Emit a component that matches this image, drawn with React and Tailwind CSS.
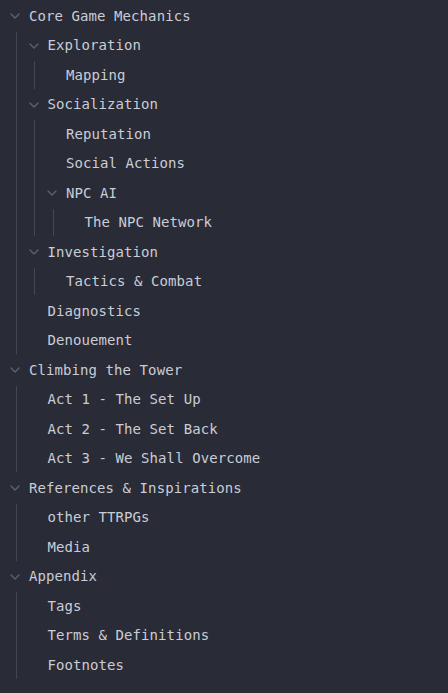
import React from 'react';

const tree = [
    {
        title: 'Core Game Mechanics',
        children: [
            { title: 'Exploration', children: [{ title: 'Mapping' }] },
            {
                title: 'Socialization',
                children: [
                    { title: 'Reputation' },
                    { title: 'Social Actions' },
                    { title: 'NPC AI', children: [{ title: 'The NPC Network' }] },
                ],
            },
            { title: 'Investigation', children: [{ title: 'Tactics & Combat' }] },
            { title: 'Diagnostics' },
            { title: 'Denouement' },
        ],
    },
    {
        title: 'Climbing the Tower',
        children: [
            { title: 'Act 1 - The Set Up' },
            { title: 'Act 2 - The Set Back' },
            { title: 'Act 3 - We Shall Overcome' },
        ],
    },
    {
        title: 'References & Inspirations',
        children: [{ title: 'other TTRPGs' }, { title: 'Media' }],
    },
    {
        title: 'Appendix',
        children: [{ title: 'Tags' }, { title: 'Terms & Definitions' }, { title: 'Footnotes' }],
    },
];

const INDENT = 18.5;

const Chevron = () => (
    <svg width="10" height="6" viewBox="0 0 10 6" fill="none" className="shrink-0">
        <path d="M1 1 L5 5 L9 1" stroke="#5c6070" strokeWidth="1.4" strokeLinecap="round" strokeLinejoin="round" />
    </svg>
);

const TreeNode = ({ node, depth }) => {
    const hasChildren = node.children && node.children.length > 0;
    return (
        <div>
            {/* qator: chuqurlikka qarab chapdan surilgan */}
            <div className="flex items-center h-[29.5px] gap-[9px]" style={{ paddingLeft: 10 + depth * INDENT }}>
                <span className="w-[10px] flex items-center justify-center">{hasChildren && <Chevron />}</span>
                <span className="text-[14px] tracking-[0.08px] text-[#c9cdd6] whitespace-nowrap">{node.title}</span>
            </div>
            {hasChildren && (
                <div className="relative">
                    <span
                        className="absolute top-[1px] bottom-[1px] w-px bg-[#434753]"
                        style={{ left: 15.5 + depth * INDENT }}
                    ></span>
                    {node.children.map((child) => (
                        <TreeNode key={child.title} node={child} depth={depth + 1} />
                    ))}
                </div>
            )}
        </div>
    );
};

export default function App() {
    return (
        <div
            className="min-h-screen bg-[#292b36] pt-[1.25px]"
            style={{ fontFamily: '"DejaVu Sans Mono", "Liberation Mono", monospace' }}
        >
            {tree.map((node) => (
                <TreeNode key={node.title} node={node} depth={0} />
            ))}
        </div>
    );
}
